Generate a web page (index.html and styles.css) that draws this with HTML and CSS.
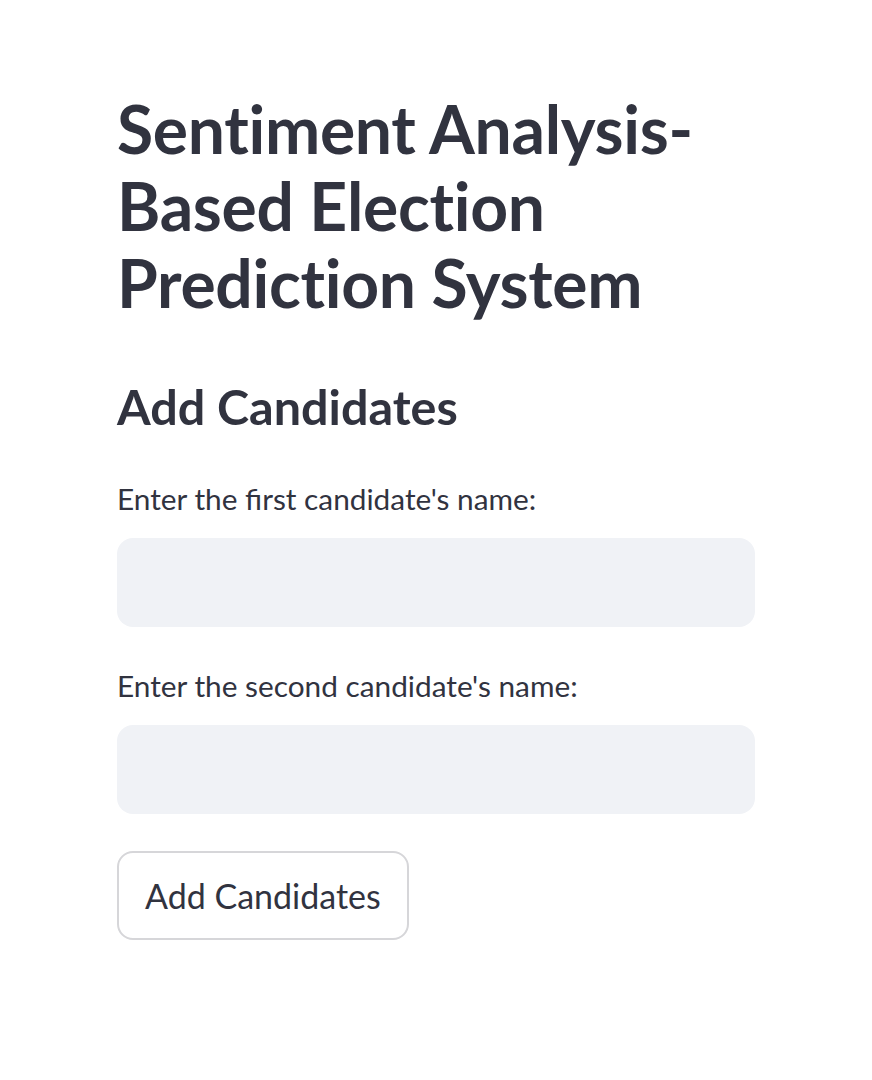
FILE: index.html
```html
<!DOCTYPE html>
<html lang="en">
<head>
<meta charset="utf-8">
<title>Sentiment Analysis-Based Election Prediction System</title>
<link rel="stylesheet" href="styles.css">
</head>
<body>
<main class="main">
  <h1 class="title">Sentiment Analysis-<br>Based Election<br>Prediction System</h1>
  <h2 class="subtitle">Add Candidates</h2>
  <div class="field">
    <label class="label" for="c1">Enter the first candidate's name:</label>
    <input class="input" id="c1" type="text">
  </div>
  <div class="field">
    <label class="label" for="c2">Enter the second candidate's name:</label>
    <input class="input" id="c2" type="text">
  </div>
  <button class="btn" type="button">Add Candidates</button>
</main>
</body>
</html>
```
FILE: styles.css
```css
* { box-sizing: border-box; }
html, body { margin: 0; background: #ffffff; }
body {
  font-family: "Lato", "Noto Sans", "Liberation Sans", sans-serif;
  color: #31333f;
}
.main {
  width: 638px;
  margin-left: 117px;
  padding-top: 90px;
  display: flex;
  flex-direction: column;
  align-items: flex-start;
}
.title {
  margin: 0;
  font-size: 66px;
  line-height: 77px;
  font-weight: 700;
  letter-spacing: -0.3px;
}
.subtitle {
  margin: 55px 0 0;
  font-size: 48.5px;
  line-height: 60px;
  font-weight: 700;
}
.field {
  width: 100%;
  display: flex;
  flex-direction: column;
  margin-top: 43px;
}
.field + .field { margin-top: 39px; }
.label {
  font-size: 29.8px;
  line-height: 40px;
  margin-bottom: 19px;
}
.input {
  width: 100%;
  height: 89px;
  border: none;
  border-radius: 16px;
  background: #f0f2f6;
  outline: none;
  font: inherit;
}
.btn {
  margin-top: 37px;
  height: 89px;
  padding: 0 26px;
  background: #ffffff;
  border: 2px solid #d6d6d9;
  border-radius: 16px;
  font-family: inherit;
  font-size: 34px;
  color: #31333f;
}
```
